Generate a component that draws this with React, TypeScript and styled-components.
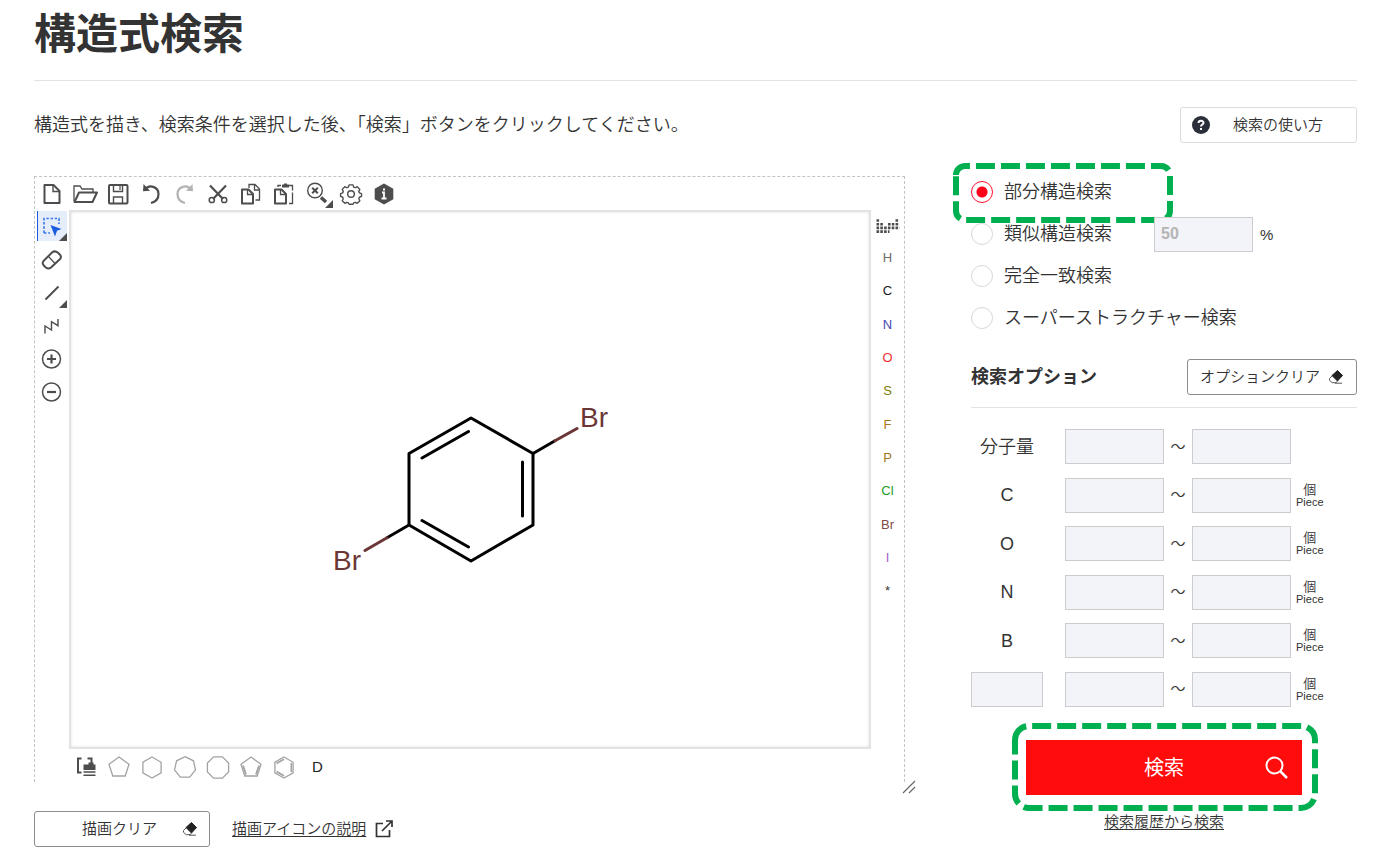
import React, { useState } from 'react';
import styled, { createGlobalStyle, css } from 'styled-components';

const GlobalStyle = createGlobalStyle`
  *, *::before, *::after { box-sizing: border-box; }
  body {
    margin: 0;
    background: #fff;
    color: #333;
    font-family: "Liberation Sans", "Noto Sans CJK JP", sans-serif;
    font-size: 18px;
    font-weight: 350;
  }
  button, input { font-family: inherit; font-weight: inherit; color: inherit; }
  button { cursor: pointer; }
`;

const Page = styled.div`
  padding: 0 35px 15px 34px;
`;

const Title = styled.h1`
  margin: 0;
  padding: 5px 0 15px;
  border-bottom: 1px solid #e3e3e3;
  font-size: 42px;
  line-height: 60px;
  font-weight: 700;
`;

const IntroRow = styled.div`
  display: flex;
  align-items: center;
  justify-content: space-between;
  margin-top: 26px;
`;

const Intro = styled.p`
  margin: 0;
  line-height: 28px;
`;

const OutlineButton = styled.button<{ $width: number; $soft?: boolean; $gap: number; $pad: number }>`
  display: flex;
  align-items: center;
  gap: ${(p) => p.$gap}px;
  width: ${(p) => p.$width}px;
  height: 36px;
  padding: 0 0 0 ${(p) => p.$pad}px;
  border: 1px solid ${(p) => (p.$soft ? '#dcdcdc' : '#8c8c8c')};
  border-radius: 3px;
  background: #fff;
  font-size: 15px;
  line-height: 24px;
`;

const Main = styled.main`
  display: grid;
  grid-template-columns: minmax(0, 1fr) 386px;
  column-gap: 66px;
  margin-top: 27px;
`;

const DrawColumn = styled.section`
  padding-top: 6px;
`;

const Editor = styled.div`
  position: relative;
  display: grid;
  grid-template-columns: 34px minmax(0, 1fr) 33px;
  grid-template-rows: 33px minmax(539px, auto) 33px;
  border: 1px dashed #c4c4c4;
  border-bottom: 0;
`;

const ToolStrip = styled.div<{ $place: 'top' | 'left' | 'right' | 'bottom' }>`
  display: flex;
  ${(p) => p.$place === 'top' && css`grid-column: 1 / -1; width: 366px;`}
  ${(p) => p.$place === 'left' && css`flex-direction: column; width: 33px; min-height: 199px; align-self: start;`}
  ${(p) => p.$place === 'right' && css`flex-direction: column; min-height: 398px; align-self: start;`}
  ${(p) => p.$place === 'bottom' && css`grid-column: 2 / -1; width: 265px; padding-top: 2px;`}
`;

const Tool = styled.button<{ $selected?: boolean; $color?: string; $size?: number }>`
  position: relative;
  flex: 1;
  display: flex;
  align-items: center;
  justify-content: center;
  padding: 0;
  border: 0;
  background: none;
  color: ${(p) => p.$color ?? '#4d4d4d'};
  font-size: ${(p) => p.$size ?? 13}px;
  line-height: 16px;
  ${(p) =>
    p.$selected &&
    css`
      background: linear-gradient(90deg, #1a5be0 1px, #e6edfa 1px) 2px 1px / 30px 30px no-repeat;
    `}
`;

const Corner = styled.span`
  position: absolute;
  right: 1px;
  bottom: 2px;
  border: 4px solid;
  border-color: transparent #4d4d4d #4d4d4d transparent;
`;

const Canvas = styled.div`
  display: flex;
  align-items: center;
  justify-content: center;
  padding-top: 20px;
  border: 2px solid #e3e3e3;
  box-shadow: inset 0 0 3px #ddd;
`;

const ResizeHandle = styled.svg`
  position: absolute;
  right: -12px;
  bottom: -12px;
`;

const DrawFooter = styled.div`
  display: flex;
  align-items: center;
  gap: 22px;
  margin-top: 29px;
`;

const TextLink = styled.a`
  display: inline-flex;
  align-items: center;
  gap: 9px;
  color: #333;
  font-size: 15px;
  line-height: 24px;
  text-decoration: underline;
  text-underline-offset: 2px;
`;

const SideColumn = styled.section`
  display: flex;
  flex-direction: column;
  padding-top: 1px;
`;

const RadioRow = styled.div`
  position: relative;
  display: flex;
  align-items: center;
  height: 42px;
`;

const RadioLabel = styled.label<{ $width?: number }>`
  display: flex;
  align-items: center;
  gap: 11px;
  width: ${(p) => (p.$width ? `${p.$width}px` : 'auto')};
  line-height: 28px;
`;

const Radio = styled.input`
  appearance: none;
  flex: none;
  width: 22px;
  height: 22px;
  margin: 0;
  border: 1px solid #d5d8dc;
  border-radius: 50%;
  background: #fff;
  &:checked {
    border-color: #ff1030;
    background: radial-gradient(circle, #ff0019 0 5px, #fff 6px);
  }
`;

const Field = styled.input`
  width: 100%;
  height: 35px;
  padding: 0 6px;
  border: 1px solid #ccc;
  background: #f3f4f9;
  font-size: 16px;
  &::placeholder { color: #b5b5b5; opacity: 1; font-weight: 700; }
`;

const SimilarityField = styled(Field)`
  width: 99px;
`;

const Percent = styled.span`
  margin-left: 7px;
  font-size: 15px;
`;

const OptionHead = styled.div`
  display: flex;
  align-items: center;
  justify-content: space-between;
  margin-top: 20px;
  padding-bottom: 12px;
  border-bottom: 1px solid #e3e3e3;
`;

const OptionTitle = styled.h2`
  margin: 0;
  font-size: 18px;
  line-height: 28px;
`;

const OptionList = styled.div`
  display: flex;
  flex-direction: column;
  justify-content: space-between;
  min-height: 278px;
  margin-top: 21px;
`;

const OptionRow = styled.div`
  display: grid;
  grid-template-columns: 72px 22px 99px 28px 99px auto;
  align-items: center;
`;

const OptionName = styled.span`
  grid-column: 1;
  text-align: center;
  line-height: 28px;
`;

const FromField = styled(Field)`
  grid-column: 3;
`;

const Tilde = styled.span`
  text-align: center;
  line-height: 28px;
  font-size: 15px;
`;

const Unit = styled.span`
  display: flex;
  flex-direction: column;
  align-items: center;
  justify-self: start;
  margin-left: 5px;
  padding-top: 1px;
  font-size: 13px;
  line-height: 13px;
`;

const UnitNote = styled.span`
  font-size: 11px;
`;

const SearchArea = styled.div`
  position: relative;
  align-self: center;
  margin-top: 33px;
`;

const SearchButton = styled.button`
  display: grid;
  grid-template-columns: 1fr auto 1fr;
  align-items: center;
  width: 276px;
  height: 55px;
  padding: 0 14px;
  border: 0;
  background: #ff0c0c;
  color: #fff;
  font-size: 20px;
  font-weight: 400;
  line-height: 28px;
  & > span { grid-column: 2; }
  & > svg { justify-self: end; }
`;

const Highlight = styled.svg<{ $left: number; $top: number }>`
  position: absolute;
  left: ${(p) => p.$left}px;
  top: ${(p) => p.$top}px;
  pointer-events: none;
`;

const HistoryLink = styled(TextLink)`
  align-self: center;
  margin-top: 15px;
`;

function DashedFrame({ w, h, r, left, top }: { w: number; h: number; r: number; left: number; top: number }) {
  const a = `a${r} ${r} 0 0 1`;
  return (
    <Highlight $left={left} $top={top} width={w + 6} height={h + 6} aria-hidden="true">
      <path
        d={`M3 ${3 + r}${a} ${r} ${-r}h${w - 2 * r}${a} ${r} ${r}v${h - 2 * r}${a} ${-r} ${r}h${2 * r - w}${a} ${-r} ${-r}z`}
        fill="none"
        stroke="#00b050"
        strokeWidth="6"
        strokeDasharray="19 6"
      />
    </Highlight>
  );
}

const Icon = ({ children }: { children: React.ReactNode }) => (
  <svg width="26" height="24" viewBox="-1 0 26 24" fill="none" stroke="currentColor" strokeWidth="2" aria-hidden="true">
    {children}
  </svg>
);

const topTools: { name: string; color?: string; corner?: boolean; art: React.ReactNode }[] = [
  { name: 'New', art: <><path d="M4.500 3h9l6 6v12h-15z" strokeLinejoin="round" /><path d="M13 3.500v6h6.500" strokeWidth="1.4" /></> },
  {
    name: 'Open',
    art: <><path d="M1 19V4h6l2 3h11v4" strokeWidth="1.3" /><path d="M6 10.500h18L19.500 20H1.500z" strokeLinejoin="round" /></>,
  },
  {
    name: 'Save',
    art: <><rect x="3" y="3" width="18.500" height="18.500" rx="1" /><path d="M7.500 3v6.500h9V3M7.500 21v-6h9v6" strokeWidth="1.4" /><path d="M14 4v4" strokeWidth="1.200" /></>,
  },
  { name: 'Undo', art: <><path d="M6 7.500C10 2 19.500 4.500 19.500 12c0 5-3.500 8-7.500 9" strokeWidth="2.200" /><path d="M4.500 2 4 9.200l7-.4z" fill="currentColor" stroke="none" /></> },
  {
    name: 'Redo',
    color: '#b3b3b3',
    art: <><path d="M18 7.500C14 2 4.500 4.500 4.500 12c0 5 3.500 8 7.500 9" strokeWidth="2.200" /><path d="M19.500 2 20 9.200l-7-.4z" fill="currentColor" stroke="none" /></>,
  },
  {
    name: 'Cut',
    art: <><path d="M4 3.500 17 17M20 3.500 7 17" strokeWidth="2.200" /><circle cx="5.800" cy="18" r="2.600" strokeWidth="1.500" /><circle cx="18.200" cy="18" r="2.600" strokeWidth="1.500" /></>,
  },
  {
    name: 'Copy',
    art: <><path d="M3 7.500h6.500l4.500 4.500v9.500H3z" strokeLinejoin="round" /><path d="M8.500 8v4.500H13" strokeWidth="1.300" /><path d="M10 6V2.500h6L20.500 7v11H16.500M15.500 3v5h5" strokeWidth="1.300" /></>,
  },
  {
    name: 'Paste',
    art: <><path d="M3 7.500h6.500l4.500 4.500v9.500H3z" strokeLinejoin="round" /><path d="M8.500 8v4.500H13" strokeWidth="1.300" /><path d="M6 5V3.500h3M17 3.500h3.500v5M20.500 10.500v11H17" strokeWidth="1.300" /><path d="M10 5.500V2.500h2V1.500h3v1h2v3z" fill="currentColor" stroke="none" /></>,
  },
  {
    name: 'Zoom',
    corner: true,
    art: <><circle cx="9" cy="8.500" r="7.300" strokeWidth="1.400" /><path d="m6.200 5.700 5.600 5.600M11.800 5.700l-5.600 5.600" /><path d="m15 15.500 5 4.500" strokeWidth="3.500" /></>,
  },
  {
    name: 'Settings',
    art: <><circle cx="12" cy="12" r="3.300" strokeWidth="1.400" /><path d="M10 2.500h4l.7 2.300 1.600.7 2.100-1.100 2.700 2.800-1.100 2.100.6 1.500 2.200.7v3l-2.200.8-.6 1.500 1.100 2.100-2.700 2.700-2.100-1.100-1.600.7-.7 1.300h-4l-.7-1.300-1.600-.7-2.100 1.100-2.700-2.700 1.100-2.100-.6-1.500-2.200-.8v-3l2.200-.7.6-1.500-1.100-2.100 2.700-2.800 2.100 1.100 1.600-.7z" strokeWidth="1.400" strokeLinejoin="round" transform="translate(.4 .4) scale(.97)" /></>,
  },
  {
    name: 'About',
    art: <><path d="m12 1.500 9.300 5.300v10.400L12 22.500l-9.300-5.300V6.800z" fill="currentColor" stroke="none" /><path d="M10 10.500h2v6M9.500 16.500h5M11 7.500h2" stroke="#fff" strokeWidth="1.800" /></>,
  },
];

const leftTools: { name: string; selected?: boolean; corner?: boolean; art: React.ReactNode }[] = [
  {
    name: 'Select',
    selected: true,
    corner: true,
    art: <><path d="M4 18V3.500h15V9M4 18h6" stroke="#3f7ae8" strokeWidth="1.700" strokeDasharray="2.500 1.700" /><path d="m10.500 10 11 4-4.500 1.800-2 5.700z" fill="#1a5be0" stroke="none" /></>,
  },
  {
    name: 'Erase',
    art: <><path d="M3.500 13 12 4.500c1.800-1.500 4.200-1.300 6 .2l2 2c1.300 1.600 1.300 3-.2 4.500L11 19.500c-1.500 1.200-3.500 1.200-5.200 0l-2-2c-1.300-1.500-1.500-3-.3-4.500z" /><path d="m8.500 8.500 6.500 7" strokeWidth="1.200" /></>,
  },
  { name: 'Single bond', corner: true, art: <path d="M5.500 18.500 18.500 5.500" /> },
  { name: 'Chain', art: <path d="M5 19.500V12l6.500 4V7.700l6.500 4V5" strokeWidth="1.400" /> },
  { name: 'Charge plus', art: <><circle cx="11.500" cy="12" r="9" strokeWidth="1.500" /><path d="M11.500 7.500v9M7 12h9" strokeWidth="2.200" /></> },
  { name: 'Charge minus', art: <><circle cx="11.500" cy="12" r="9" strokeWidth="1.500" /><path d="M7 12h9" strokeWidth="2.200" /></> },
];

const atoms: [string, string][] = [
  ['H', '#6b6b6b'],
  ['C', '#1a1a1a'],
  ['N', '#4646b4'],
  ['O', '#f03030'],
  ['S', '#7d7d00'],
  ['F', '#a8781e'],
  ['P', '#a07818'],
  ['Cl', '#1a9c1a'],
  ['Br', '#804848'],
  ['I', '#a060c8'],
  ['*', '#333'],
];

function polygon(n: number, r: number, turn = 0) {
  return Array.from({ length: n }, (_, i) => {
    const t = turn - Math.PI / 2 + (i * 2 * Math.PI) / n;
    return `${(12 + r * Math.cos(t)).toFixed(1)},${(12.5 + r * Math.sin(t)).toFixed(1)}`;
  }).join(' ');
}

const rings: { name: string; art: React.ReactNode }[] = [
  { name: 'Cyclopentane', art: <polygon points={polygon(5, 10.5)} /> },
  { name: 'Cyclohexane', art: <polygon points={polygon(6, 10.5)} /> },
  { name: 'Cycloheptane', art: <polygon points={polygon(7, 10.8)} /> },
  { name: 'Cyclooctane', art: <polygon points={polygon(8, 11.5, Math.PI / 8)} /> },
  { name: 'Cyclopentadiene', art: <><polygon points={polygon(5, 10.5)} /><path d="m4 10.500 3 9M20 10.500l-3 9" strokeWidth="1.800" /></> },
  { name: 'Benzene', art: <><polygon points={polygon(6, 10.5)} /><path d="M4.500 8.500 12 4.200M19.300 8v9M4.500 16.500l7.500 4.300" strokeWidth="1.600" /></> },
];

const Eraser = () => (
  <svg width="16" height="16" viewBox="0 0 16 16" aria-hidden="true">
    <path d="M9.500 1.500 14.500 6.500 9.500 12 4 6.500z" fill="#222" stroke="#222" strokeLinejoin="round" />
    <path d="M4 7 1.500 9.500v1.800l2.700 2.400h4L9.500 12M7 14.200h7" fill="none" stroke="#555" />
  </svg>
);

const Molecule = () => (
  <svg width="280" height="179" viewBox="330 400 280 179" fill="none" stroke="#000" strokeWidth="3" strokeLinecap="round" strokeLinejoin="round" role="img" aria-label="1,4-dibromobenzene">
    <path d="m471 418 62 35.500v71.500L471 561l-62-36v-71.500z" />
    <path d="m422 458 46.500-26.500M522.500 462v54M422 520.500l46.500 26.500M533 453.500l22-12.700M409 525l-22 12.700" />
    <path d="m555 440.800 22-12.300M387 537.700l-22 12.800" stroke="#6b3636" />
    <g fill="#6b3636" stroke="none" fontSize="28" fontFamily="Liberation Sans, sans-serif">
      <text x="580" y="427">Br</text>
      <text x="333" y="570">Br</text>
    </g>
  </svg>
);

const modes = ['部分構造検索', '類似構造検索', '完全一致検索', 'スーパーストラクチャー検索'];
const options = ['分子量', 'C', 'O', 'N', 'B', ''];

export default function App() {
  const [mode, setMode] = useState(0);
  return (
    <Page>
      <GlobalStyle />
      <Title>構造式検索</Title>
      <IntroRow>
        <Intro>構造式を描き、検索条件を選択した後、「検索」ボタンをクリックしてください。</Intro>
        <OutlineButton $width={177} $gap={23} $pad={11} $soft>
          <svg width="18" height="18" viewBox="0 0 18 18" aria-hidden="true">
            <circle cx="9" cy="9" r="9" fill="#2a2f3a" />
            <path d="M6.500 7c.2-3 5.200-2.800 5 0-.1 1.600-2.500 1.500-2.500 3.500M9 12v2" fill="none" stroke="#fff" strokeWidth="2" />
          </svg>
          検索の使い方
        </OutlineButton>
      </IntroRow>

      <Main>
        <DrawColumn>
          <Editor>
            <ToolStrip $place="top">
              {topTools.map((t) => (
                <Tool key={t.name} aria-label={t.name} $color={t.color}>
                  <Icon>{t.art}</Icon>
                  {t.corner && <Corner />}
                </Tool>
              ))}
            </ToolStrip>
            <ToolStrip $place="left">
              {leftTools.map((t) => (
                <Tool key={t.name} aria-label={t.name} $selected={t.selected}>
                  <Icon>{t.art}</Icon>
                  {t.corner && <Corner />}
                </Tool>
              ))}
            </ToolStrip>
            <Canvas>
              <Molecule />
            </Canvas>
            <ToolStrip $place="right">
              <Tool aria-label="Periodic table">
                <svg width="24" height="14" viewBox="0 0 24 14" fill="none" stroke="#4d4d4d" strokeWidth="2.600" strokeDasharray="2.600 1.200" aria-hidden="true">
                  <path d="M.5 1.500h3M19.500 1.500h3M.5 5.200h6.500M12 5.200h11M.5 8.900h23M.5 12.600h13" />
                </svg>
              </Tool>
              {atoms.map(([symbol, color]) => (
                <Tool key={symbol} $color={color}>{symbol}</Tool>
              ))}
            </ToolStrip>
            <ToolStrip $place="bottom">
              <Tool aria-label="Template library">
                <Icon>
                  <path d="M7.500 3.500H4v14h3.500M13.500 3.500h4v6" strokeWidth="2" />
                  <path d="M9.500 9.500h12v5.500h-12zM14.500 7.500h5v3h-5z" fill="currentColor" stroke="none" />
                  <path d="M9.500 17h12M9.500 20.200h12" strokeWidth="1.500" />
                </Icon>
              </Tool>
              {rings.map((r) => (
                <Tool key={r.name} aria-label={r.name} $color="#a3a3a3">
                  <svg width="24" height="24" viewBox="0 0 24 24" fill="none" stroke="currentColor" strokeWidth="1.300" aria-hidden="true">{r.art}</svg>
                </Tool>
              ))}
              <Tool $color="#222" $size={15}>D</Tool>
            </ToolStrip>
            <ResizeHandle width="14" height="14" viewBox="0 0 14 14" stroke="#666" strokeWidth="1.200" aria-hidden="true">
              <path d="M1 13 13 1M7 13l6-6" />
            </ResizeHandle>
          </Editor>
          <DrawFooter>
            <OutlineButton $width={176} $gap={25} $pad={47}>
              描画クリア
              <Eraser />
            </OutlineButton>
            <TextLink href="#icons">
              描画アイコンの説明
              <svg width="18" height="18" viewBox="0 0 18 18" fill="none" stroke="#333" strokeWidth="1.700" aria-hidden="true">
                <path d="M8 3.500H1.500v13h13V10M11 1h6v6M17 1 7 11" />
              </svg>
            </TextLink>
          </DrawFooter>
        </DrawColumn>

        <SideColumn>
          {modes.map((m, i) => (
            <RadioRow key={m}>
              <RadioLabel $width={i === 1 ? 183 : undefined}>
                <Radio type="radio" name="mode" checked={mode === i} onChange={() => setMode(i)} />
                {m}
              </RadioLabel>
              {i === 1 && (
                <>
                  <SimilarityField aria-label="類似度" placeholder="50" />
                  <Percent>%</Percent>
                </>
              )}
              {i === 0 && <DashedFrame w={214} h={54} r={9} left={-18} top={-8} />}
            </RadioRow>
          ))}

          <OptionHead>
            <OptionTitle>検索オプション</OptionTitle>
            <OutlineButton $width={170} $gap={8} $pad={12}>
              オプションクリア
              <Eraser />
            </OutlineButton>
          </OptionHead>

          <OptionList>
            {options.map((name, i) => (
              <OptionRow key={i}>
                {name ? <OptionName>{name}</OptionName> : <Field aria-label="元素" />}
                <FromField aria-label={`${name || '元素'} 最小`} />
                <Tilde>～</Tilde>
                <Field aria-label={`${name || '元素'} 最大`} />
                {i > 0 && (
                  <Unit>
                    個
                    <UnitNote>Piece</UnitNote>
                  </Unit>
                )}
              </OptionRow>
            ))}
          </OptionList>

          <SearchArea>
            <SearchButton>
              <span>検索</span>
              <svg width="23" height="23" viewBox="0 0 23 23" fill="none" stroke="#fff" strokeWidth="2" aria-hidden="true">
                <circle cx="9.500" cy="9.500" r="8" />
                <path d="m15 15 7 7" strokeWidth="2.500" />
              </svg>
            </SearchButton>
            <DashedFrame w={300} h={82} r={14} left={-14} top={-17} />
          </SearchArea>
          <HistoryLink href="#history">検索履歴から検索</HistoryLink>
        </SideColumn>
      </Main>
    </Page>
  );
}
